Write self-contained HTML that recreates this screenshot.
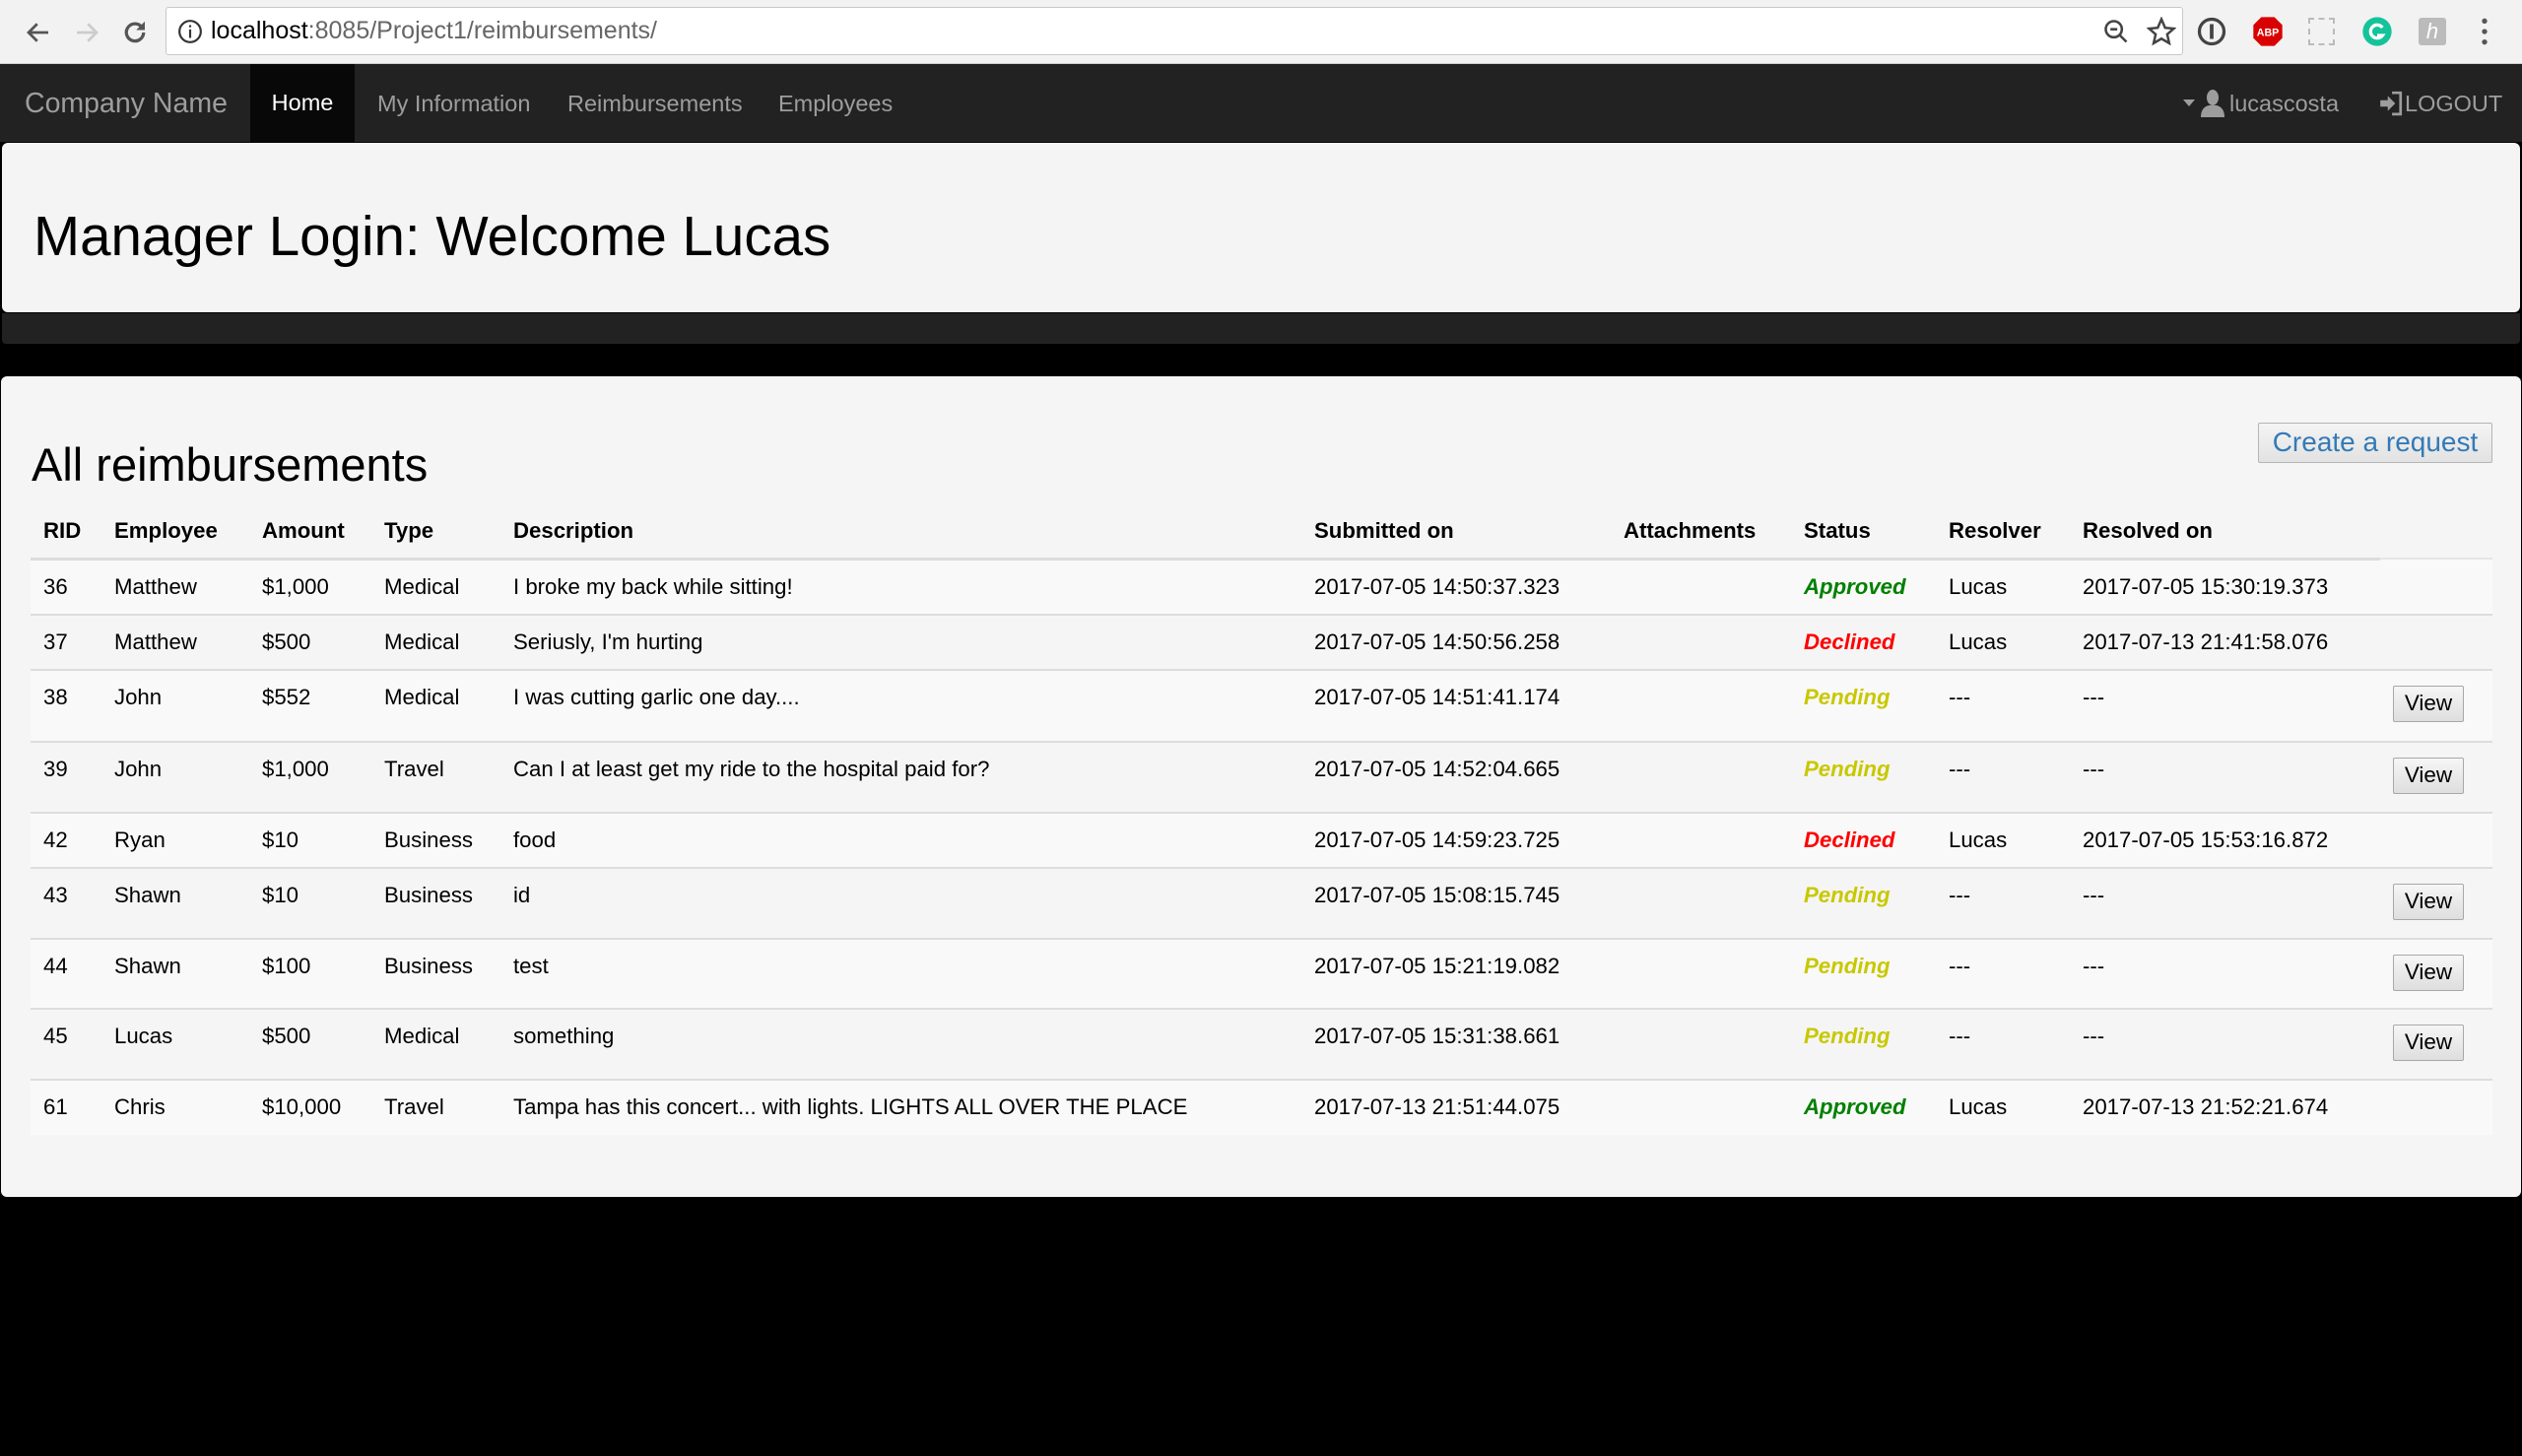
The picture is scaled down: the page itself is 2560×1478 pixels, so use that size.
<!DOCTYPE html>
<html><head><meta charset="utf-8">
<style>
*{box-sizing:border-box;margin:0;padding:0}
html,body{width:2560px;height:1478px;overflow:hidden;background:#000;font-family:"Liberation Sans",Arial,sans-serif;color:#000}
.abs{position:absolute}
#chrome{left:0;top:0;width:2560px;height:65px;background:#f2f2f2;border-bottom:1px solid #d0d0d0}
#url{left:168px;top:7px;width:2048px;height:49px;background:#fff;border:1px solid #c8c8c8;border-radius:3px}
#urltext{left:214px;top:15px;font-size:25px;color:#000}
#urltext span{color:#666}
#nav{left:0;top:65px;width:2560px;height:79px;background:#222}
.navt{top:1px;height:79px;line-height:79px;font-size:23.5px;color:#9d9d9d}
#home{left:254px;width:106px;background:#080808;color:#fff;text-align:center;top:0}
#jumbo{left:2px;top:145px;width:2556px;height:172px;background:#f4f4f4;border-radius:6px}
#jumbo h1{position:absolute;left:32px;top:67px;font-size:56.5px;font-weight:normal;line-height:1}
#strip{left:2px;top:318px;width:2556px;height:31px;background:#222;border-radius:0 0 4px 4px}
#panel{left:1px;top:382px;width:2558px;height:833px;background:#f5f5f5;border-radius:6px}
#panel h2{position:absolute;left:31px;top:66px;font-size:47px;font-weight:normal;line-height:1}
#create{left:2292px;top:429px;width:238px;height:41px;background:linear-gradient(#f4f4f4,#e2e2e2);border:1px solid #b5b5b5;color:#337ab7;font-size:28px;text-align:center;line-height:38px;border-radius:2px}
table{position:absolute;left:31px;top:512px;border-collapse:collapse;table-layout:fixed;width:2499px;font-size:22.2px}
th{text-align:left;font-weight:bold;height:55px;padding:0 13px;border-bottom:3px solid #ddd;vertical-align:middle}
td{padding:14px 13px 0;vertical-align:top;border-top:2px solid #ddd;white-space:nowrap}
tr.o td{background:#f9f9f9}
tr.e td{background:#f5f5f5}
.ap{color:#008000;font-weight:bold;font-style:italic}
.de{color:#f00;font-weight:bold;font-style:italic}
.pe{color:#c8c800;font-weight:bold;font-style:italic}
.view{display:inline-block;margin-top:1px;width:72px;height:37px;line-height:34px;text-align:center;background:linear-gradient(#f6f6f6,#dedede);border:1px solid #a8a8a8;border-radius:2px;font-size:22.5px}
</style></head><body>
<div id="chrome" class="abs">
 <svg class="abs" style="left:24px;top:18px" width="30" height="30" viewBox="0 0 24 24"><path d="M20 12H5M11 5l-7 7 7 7" stroke="#555" stroke-width="2.2" fill="none"/></svg>
 <svg class="abs" style="left:73px;top:18px" width="30" height="30" viewBox="0 0 24 24"><path d="M4 12h15M13 5l7 7-7 7" stroke="#ccc" stroke-width="2.2" fill="none"/></svg>
 <svg class="abs" style="left:122px;top:18px" width="30" height="30" viewBox="0 0 24 24"><path d="M19 12a7 7 0 1 1-2-5" stroke="#555" stroke-width="2.6" fill="none"/><path d="M20 3v7h-7z" fill="#555"/></svg>
</div>
<div id="url" class="abs"></div>
<svg class="abs" style="left:180px;top:19px" width="26" height="26" viewBox="0 0 24 24"><circle cx="12" cy="12" r="10" stroke="#333" stroke-width="2" fill="none"/><rect x="11" y="10" width="2" height="8" fill="#333"/><rect x="11" y="6" width="2" height="2" fill="#333"/></svg>
<div id="urltext" class="abs" style="top:17px">localhost<span>:8085/Project1/reimbursements/</span></div>
<svg class="abs" style="left:2134px;top:18px" width="28" height="28" viewBox="0 0 24 24"><circle cx="10" cy="10" r="7" stroke="#444" stroke-width="2.2" fill="none"/><path d="M15 15l6 6M7 10h6" stroke="#444" stroke-width="2.2"/></svg>
<svg class="abs" style="left:2179px;top:17px" width="30" height="30" viewBox="0 0 24 24"><path d="M12 2l3 7 7 .6-5.3 4.7 1.6 7.2L12 17.8 5.7 21.5l1.6-7.2L2 9.6 9 9z" stroke="#444" stroke-width="2" fill="none"/></svg>
<svg class="abs" style="left:2230px;top:17px" width="30" height="30" viewBox="0 0 24 24"><circle cx="12" cy="12" r="10" stroke="#444" stroke-width="2.6" fill="none"/><rect x="10.5" y="6" width="3" height="12" fill="#444"/></svg>
<svg class="abs" style="left:2286px;top:16px" width="32" height="32" viewBox="0 0 24 24"><path d="M7 1h10l6 6v10l-6 6H7l-6-6V7z" fill="#d90000"/><text x="12" y="15.5" font-size="8" font-weight="bold" fill="#fff" text-anchor="middle" font-family="Liberation Sans">ABP</text></svg>
<div class="abs" style="left:2343px;top:18px;width:27px;height:28px;border:2px dashed #bbb"></div>
<svg class="abs" style="left:2397px;top:16px" width="32" height="32" viewBox="0 0 24 24"><circle cx="12" cy="12" r="11" fill="#15c39a"/><path d="M16 9a5 5 0 1 0 0 6h-4" stroke="#fff" stroke-width="2.5" fill="none"/></svg>
<div class="abs" style="left:2455px;top:18px;width:28px;height:28px;background:#bbb;border-radius:3px;color:#fff;font-style:italic;font-size:22px;text-align:center;line-height:28px">h</div>
<svg class="abs" style="left:2512px;top:16px" width="20" height="32" viewBox="0 0 10 24"><circle cx="5" cy="4" r="2" fill="#555"/><circle cx="5" cy="12" r="2" fill="#555"/><circle cx="5" cy="20" r="2" fill="#555"/></svg>

<div id="nav" class="abs">
 <div class="navt abs" style="left:25px;font-size:28.5px">Company Name</div>
 <div id="home" class="navt abs">Home</div>
 <div class="navt abs" style="left:383px">My Information</div>
 <div class="navt abs" style="left:576px">Reimbursements</div>
 <div class="navt abs" style="left:790px">Employees</div>
 <svg class="abs" style="left:2216px;top:36px" width="12" height="8" viewBox="0 0 12 8"><path d="M0 0h12L6 7z" fill="#9d9d9d"/></svg>
 <svg class="abs" style="left:2234px;top:26px" width="24" height="28" viewBox="0 0 24 28"><ellipse cx="12" cy="8" rx="6" ry="8" fill="#9d9d9d"/><path d="M0 28c0-8 4-11 8-12h8c4 1 8 4 8 12z" fill="#9d9d9d"/></svg>
 <div class="navt abs" style="left:2263px">lucascosta</div>
 <svg class="abs" style="left:2414px;top:27px" width="26" height="26" viewBox="0 0 24 24"><path d="M2 9h7V5l7 7-7 7v-4H2z" fill="#9d9d9d"/><path d="M13 2h8v20h-8" stroke="#9d9d9d" stroke-width="2.5" fill="none"/></svg>
 <div class="navt abs" style="left:2441px">LOGOUT</div>
</div>

<div id="jumbo" class="abs"><h1>Manager Login: Welcome Lucas</h1></div>
<div id="strip" class="abs"></div>

<div id="panel" class="abs"><h2>All reimbursements</h2></div>
<div id="create" class="abs">Create a request</div>

<table>
<colgroup><col style="width:72px"><col style="width:150px"><col style="width:124px"><col style="width:131px"><col style="width:813px"><col style="width:314px"><col style="width:183px"><col style="width:147px"><col style="width:136px"><col style="width:315px"><col style="width:114px"></colgroup>
<tr style="background:#f5f5f5"><th>RID</th><th>Employee</th><th>Amount</th><th>Type</th><th>Description</th><th>Submitted on</th><th>Attachments</th><th>Status</th><th>Resolver</th><th>Resolved on</th><th style="border-bottom:2px solid #e6e6e6"></th></tr>
<tr class="o" style="height:57px"><td>36</td><td>Matthew</td><td>$1,000</td><td>Medical</td><td>I broke my back while sitting!</td><td>2017-07-05 14:50:37.323</td><td></td><td class="ap">Approved</td><td>Lucas</td><td>2017-07-05 15:30:19.373</td><td></td></tr>
<tr class="e" style="height:56px"><td>37</td><td>Matthew</td><td>$500</td><td>Medical</td><td>Seriusly, I'm hurting</td><td>2017-07-05 14:50:56.258</td><td></td><td class="de">Declined</td><td>Lucas</td><td>2017-07-13 21:41:58.076</td><td></td></tr>
<tr class="o" style="height:73px"><td>38</td><td>John</td><td>$552</td><td>Medical</td><td>I was cutting garlic one day....</td><td>2017-07-05 14:51:41.174</td><td></td><td class="pe">Pending</td><td>---</td><td>---</td><td><span class="view">View</span></td></tr>
<tr class="e" style="height:72px"><td>39</td><td>John</td><td>$1,000</td><td>Travel</td><td>Can I at least get my ride to the hospital paid for?</td><td>2017-07-05 14:52:04.665</td><td></td><td class="pe">Pending</td><td>---</td><td>---</td><td><span class="view">View</span></td></tr>
<tr class="o" style="height:56px"><td>42</td><td>Ryan</td><td>$10</td><td>Business</td><td>food</td><td>2017-07-05 14:59:23.725</td><td></td><td class="de">Declined</td><td>Lucas</td><td>2017-07-05 15:53:16.872</td><td></td></tr>
<tr class="e" style="height:72px"><td>43</td><td>Shawn</td><td>$10</td><td>Business</td><td>id</td><td>2017-07-05 15:08:15.745</td><td></td><td class="pe">Pending</td><td>---</td><td>---</td><td><span class="view">View</span></td></tr>
<tr class="o" style="height:71px"><td>44</td><td>Shawn</td><td>$100</td><td>Business</td><td>test</td><td>2017-07-05 15:21:19.082</td><td></td><td class="pe">Pending</td><td>---</td><td>---</td><td><span class="view">View</span></td></tr>
<tr class="e" style="height:72px"><td>45</td><td>Lucas</td><td>$500</td><td>Medical</td><td>something</td><td>2017-07-05 15:31:38.661</td><td></td><td class="pe">Pending</td><td>---</td><td>---</td><td><span class="view">View</span></td></tr>
<tr class="o" style="height:56px"><td>61</td><td>Chris</td><td>$10,000</td><td>Travel</td><td>Tampa has this concert... with lights. LIGHTS ALL OVER THE PLACE</td><td>2017-07-13 21:51:44.075</td><td></td><td class="ap">Approved</td><td>Lucas</td><td>2017-07-13 21:52:21.674</td><td></td></tr>
</table>
</body></html>
